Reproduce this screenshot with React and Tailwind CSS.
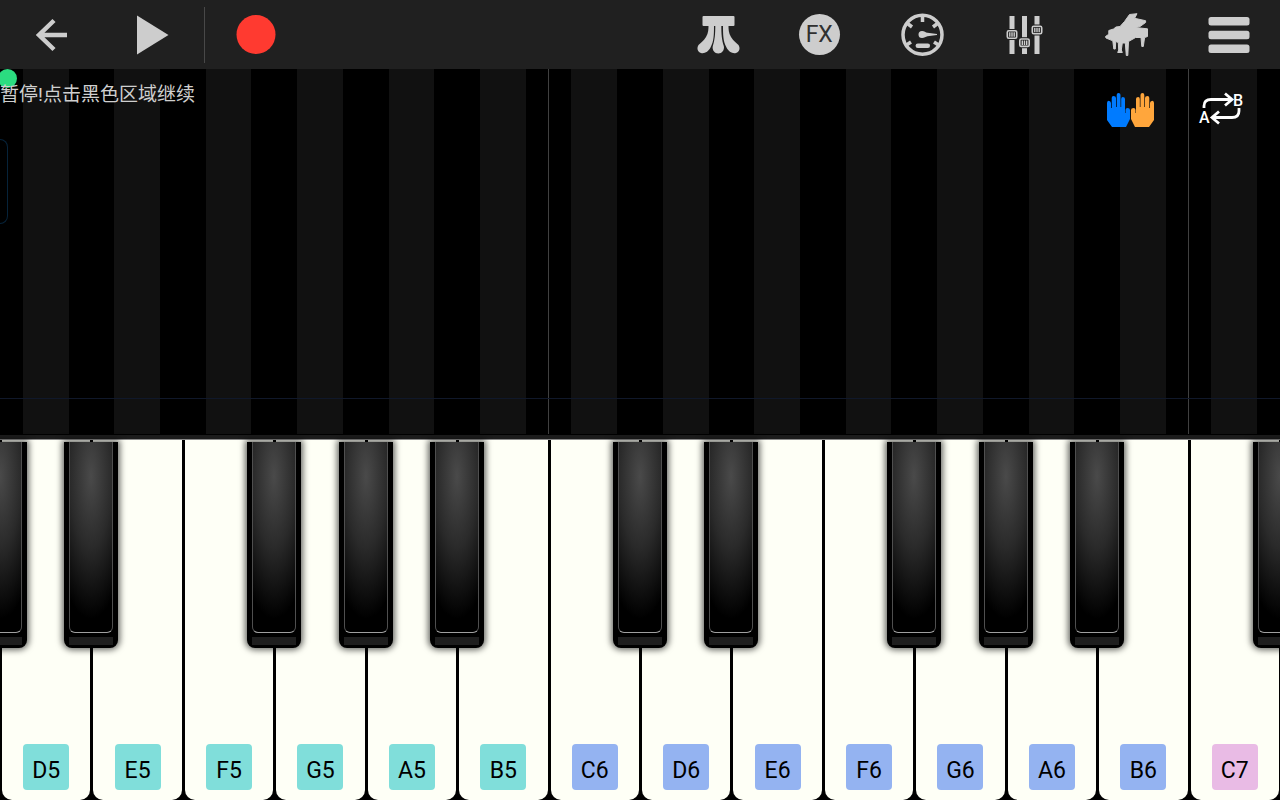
const LABEL_COLORS = {
  5: "bg-[#80deda]",
  6: "bg-[#94b3f1]",
  7: "bg-[#e9bbe5]",
};

// `sharp` marks a black key sitting on the left edge of the white key
const KEYS = [
  { note: "D", octave: 5, sharp: "C♯5" },
  { note: "E", octave: 5, sharp: "D♯5" },
  { note: "F", octave: 5 },
  { note: "G", octave: 5, sharp: "F♯5" },
  { note: "A", octave: 5, sharp: "G♯5" },
  { note: "B", octave: 5, sharp: "A♯5" },
  { note: "C", octave: 6 },
  { note: "D", octave: 6, sharp: "C♯6" },
  { note: "E", octave: 6, sharp: "D♯6" },
  { note: "F", octave: 6 },
  { note: "G", octave: 6, sharp: "F♯6" },
  { note: "A", octave: 6, sharp: "G♯6" },
  { note: "B", octave: 6, sharp: "A♯6" },
  { note: "C", octave: 7, next: "C♯7" },
];

function BackIcon() {
  return (
    <svg viewBox="0 0 44 44" className="size-11" fill="none" stroke="#cdcdcd" strokeWidth="4.5" aria-hidden>
      <path d="M38 22H10M25 7.500L10 22l15 14.500" />
    </svg>
  );
}

function PlayIcon() {
  return (
    <svg viewBox="0 0 44 44" className="size-11" fill="#cdcdcd" aria-hidden>
      <path d="M5 2.500v39L36.500 22z" />
    </svg>
  );
}

function RecordIcon() {
  return (
    <svg viewBox="0 0 44 44" className="size-11" aria-hidden>
      <circle cx="22" cy="21.500" r="19.500" fill="#ff3a30" />
    </svg>
  );
}

function PedalsIcon() {
  return (
    <svg viewBox="0 0 44 44" className="size-11 overflow-visible" fill="#cdcdcd" aria-hidden>
      <path d="M8.500 3h30q1 0 1 1v8q0 1-1 1h-30q-1 0-1-1V4q0-1 1-1z" />
      <path d="M13.500 12h5.500c0 10 0 16-3.500 22.500-2 4-6 6.500-9.500 5.500-3.500-1-4.500-5-2.500-8 2-2 5-4 7.500-8 2.500-4 2.500-8 2.500-12z" />
      <path d="M20.300 12h6c0 9 .5 15 2.500 21 1 4-2 7.500-5.500 7.500s-6.500-3.500-5.500-7.500c2-6 2.500-12 2.500-21z" />
      <path d="M33.500 12H28c0 10 0 16 3.500 22.500 2 4 6 6.500 9.500 5.500 3.500-1 4.500-5 2.500-8-2-2-5-4-7.500-8-2.500-4-2.500-8-2.500-12z" />
    </svg>
  );
}

function TempoIcon() {
  return (
    <svg viewBox="0 0 44 44" className="size-11" fill="none" stroke="#cdcdcd" aria-hidden>
      <circle cx="22.500" cy="21.800" r="19.500" strokeWidth="3.500" />
      <path d="M22.500 3v6M7.500 10.500l4.500 3.500M37.500 10.500l-4.500 3.500M6.500 32l4.500-3M38.500 32l-4.500-3" strokeWidth="3.500" />
      <path d="M22 18a3.500 3.500 0 1 0 0 7c2.500 0 3.500-1.500 5.500-1.800l9.500-1.200v-1l-9.500-1.200c-2-.3-3-1.800-5.500-1.800z" fill="#cdcdcd" stroke="none" />
      <path d="M17.800 32.800h10" strokeWidth="4.500" strokeLinecap="round" />
    </svg>
  );
}

function MixerIcon() {
  return (
    <svg viewBox="0 0 44 44" className="size-11" aria-hidden>
      <path d="M7.500 3h5v38h-5zM20 3h5v38h-5zM32.500 3h5v38h-5z" fill="#cdcdcd" />
      {[
        [4.5, 17],
        [17, 25.2],
        [29.5, 12.5],
      ].map(([x, y]) => (
        <g key={x} transform={`translate(${x} ${y})`}>
          <path d="M-1-1h13v11h-13z" fill="#202020" />
          <rect x="0.800" y="0.800" width="9.400" height="7.400" rx="1.500" fill="#202020" stroke="#cdcdcd" strokeWidth="1.600" />
          <path d="M3.300 2.200v4.600M5.500 2.200v4.600M7.700 2.200v4.600" stroke="#cdcdcd" strokeWidth="1.400" />
        </g>
      ))}
    </svg>
  );
}

function PianoIcon() {
  return (
    <svg
      viewBox="0 0 44 44"
      className="size-11 overflow-visible"
      fill="#cdcdcd"
      stroke="#cdcdcd"
      strokeLinejoin="round"
      aria-hidden
    >
      <path d="M1.500 23.500L4.800 21.200V17.500L9.500 16L12 14L16 13.500L20.500 8.500L25.500 1.500L33 0.700L30.600 5.300L41.600 7.700V9.500L36 13.500L31 14.500L43.500 15.800V23.500L40.600 24.500L39.300 33.500H37.800L37 24.500H31.600L24.500 28.500L23.800 42.500H22.300L21.300 30H18.300L17.300 37L18.300 39.500H13.700L14.700 37L14.300 29.500L11.700 28.500L11.300 36H9.800L8.800 27.800L2 25z" />
    </svg>
  );
}

function MenuIcon() {
  return (
    <svg viewBox="0 0 44 44" className="size-11" fill="#cdcdcd" aria-hidden>
      <rect x="1.500" y="4" width="41" height="8.500" rx="2.500" />
      <rect x="1.500" y="17.800" width="41" height="8.500" rx="2.500" />
      <rect x="1.500" y="31.500" width="41" height="8.500" rx="2.500" />
    </svg>
  );
}

function HandsIcon() {
  const hand =
    "M0 10q0-2 1.500-2.200Q4 8 4 10v5h.7V5q0-2 1.800-2Q9 3 9 5v9h.7V2q0-2 1.800-2 2 0 2 2v12h.700V6q0-2 1.600-2Q18 4 18 6v14h.500v-3q0-2 2-2 2.500 0 2.500 2v9l-4 8H5l-5-7z";
  return (
    <svg viewBox="0 0 48 36" className="h-9 w-12" aria-hidden>
      <path d={hand} fill="#007bff" transform="translate(1 2)" />
      <path d={hand} fill="#ffa63c" transform="translate(48 2) scale(-1 1)" />
    </svg>
  );
}

function LoopIcon() {
  return (
    <svg viewBox="0 0 48 36" className="h-9 w-12 overflow-visible" fill="none" stroke="#fff" strokeWidth="2.8" aria-hidden>
      <path d="M6 17v-2q0-6.500 7-6.500h20M27 2.500l7 6-7 6M41 17v3q0 6.500-7 6.500H15M21 20.500l-7 6 7 6" />
      <text x="1" y="32" fontFamily="Roboto, sans-serif" fontSize="16" fontWeight="500" fill="#fff" stroke="none">A</text>
      <text x="35" y="15" fontFamily="Roboto, sans-serif" fontSize="16" fontWeight="500" fill="#fff" stroke="none">B</text>
    </svg>
  );
}

function ToolButton({ label, children }) {
  return (
    <button type="button" aria-label={label} className="flex h-full w-[8%] items-center justify-center">
      {children}
    </button>
  );
}

function Toolbar() {
  return (
    <header className="flex h-[69px] shrink-0 items-center bg-[#202020]">
      <ToolButton label="Back"><BackIcon /></ToolButton>
      <ToolButton label="Play"><PlayIcon /></ToolButton>
      <span className="-ml-px h-14 w-px bg-[#484848]" />
      <ToolButton label="Record"><RecordIcon /></ToolButton>
      <div className="flex-1" />
      <ToolButton label="Pedals"><PedalsIcon /></ToolButton>
      <ToolButton label="Effects">
        <span className="flex size-[41px] items-center justify-center rounded-full bg-[#cdcdcd] pt-0.5 text-[23px] text-[#303030]">FX</span>
      </ToolButton>
      <ToolButton label="Tempo"><TempoIcon /></ToolButton>
      <ToolButton label="Mixer"><MixerIcon /></ToolButton>
      <ToolButton label="Instrument"><PianoIcon /></ToolButton>
      <ToolButton label="Menu"><MenuIcon /></ToolButton>
    </header>
  );
}

function Stage() {
  return (
    <main className="relative flex-1 overflow-hidden bg-black">
      <div className="grid h-full grid-cols-14">
        {KEYS.map(({ note, octave }) => (
          <div
            key={note + octave}
            className={`flex justify-center ${note === "C" ? "-ml-px border-l border-[#404040]" : ""}`}
          >
            <div className="w-1/2 bg-[#111111]" />
          </div>
        ))}
      </div>
      <div className="absolute inset-x-0 bottom-[35px] h-px bg-[#10182a]" />
      <span className="absolute -left-0.5 top-0 size-[19px] rounded-full bg-[#2bdc80]" />
      <p className="absolute left-0 top-3 text-[19px] leading-7 text-[#cfcfcf]">暂停!点击黑色区域继续</p>
      <div className="absolute left-0 top-[70px] h-[85px] w-2 rounded-r-lg border-y border-r border-[#06233a]" />
      <div className="absolute right-[34px] top-[22px] flex items-center gap-11">
        <button type="button" aria-label="Hands"><HandsIcon /></button>
        <button type="button" aria-label="Loop A to B"><LoopIcon /></button>
      </div>
    </main>
  );
}

function BlackKey({ name, className }) {
  return (
    <button
      type="button"
      aria-label={name}
      className={`absolute top-0.5 z-10 flex h-[206px] w-[54px] flex-col items-center rounded-b-lg bg-black shadow-[0_0_6px_2px_rgba(0,0,0,0.6)] ${className}`}
    >
      <span className="h-[191px] w-11 rounded-b-md border-x border-b border-x-[#4f4f4f] border-b-[#a0a0a0] bg-[radial-gradient(ellipse_100%_75%_at_50%_18%,#4a4a4a,#2a2a2a_50%,#000000)]" />
      <span className="mt-1 h-2 w-11 bg-[#1e1e1e]" />
    </button>
  );
}

function WhiteKey({ note, octave, sharp, next }) {
  return (
    <div className="relative border-l-2 border-r border-black">
      <button
        type="button"
        className="flex h-full w-full flex-col items-center justify-end rounded-b-[10px] bg-[#fefff6] pb-2.5"
      >
        <span
          className={`flex h-[46px] w-[46px] items-center justify-center rounded pt-2 text-[23px] text-black ${LABEL_COLORS[octave]}`}
        >
          {note}
          {octave}
        </span>
      </button>
      {sharp && <BlackKey name={sharp} className="-left-[29px]" />}
      {next && <BlackKey name={next} className="-right-7" />}
    </div>
  );
}

export default function App() {
  return (
    <div className="flex h-screen flex-col overflow-hidden bg-black font-[Roboto,'Noto_Sans_CJK_SC',sans-serif]">
      <Toolbar />
      <Stage />
      <div className="h-1.5 shrink-0 border-b border-t border-b-[#8a8a8a] border-t-black bg-[#1c1c1c]" />
      <div className="grid h-[45vh] shrink-0 grid-cols-14">
        {KEYS.map((key) => (
          <WhiteKey key={key.note + key.octave} {...key} />
        ))}
      </div>
    </div>
  );
}
